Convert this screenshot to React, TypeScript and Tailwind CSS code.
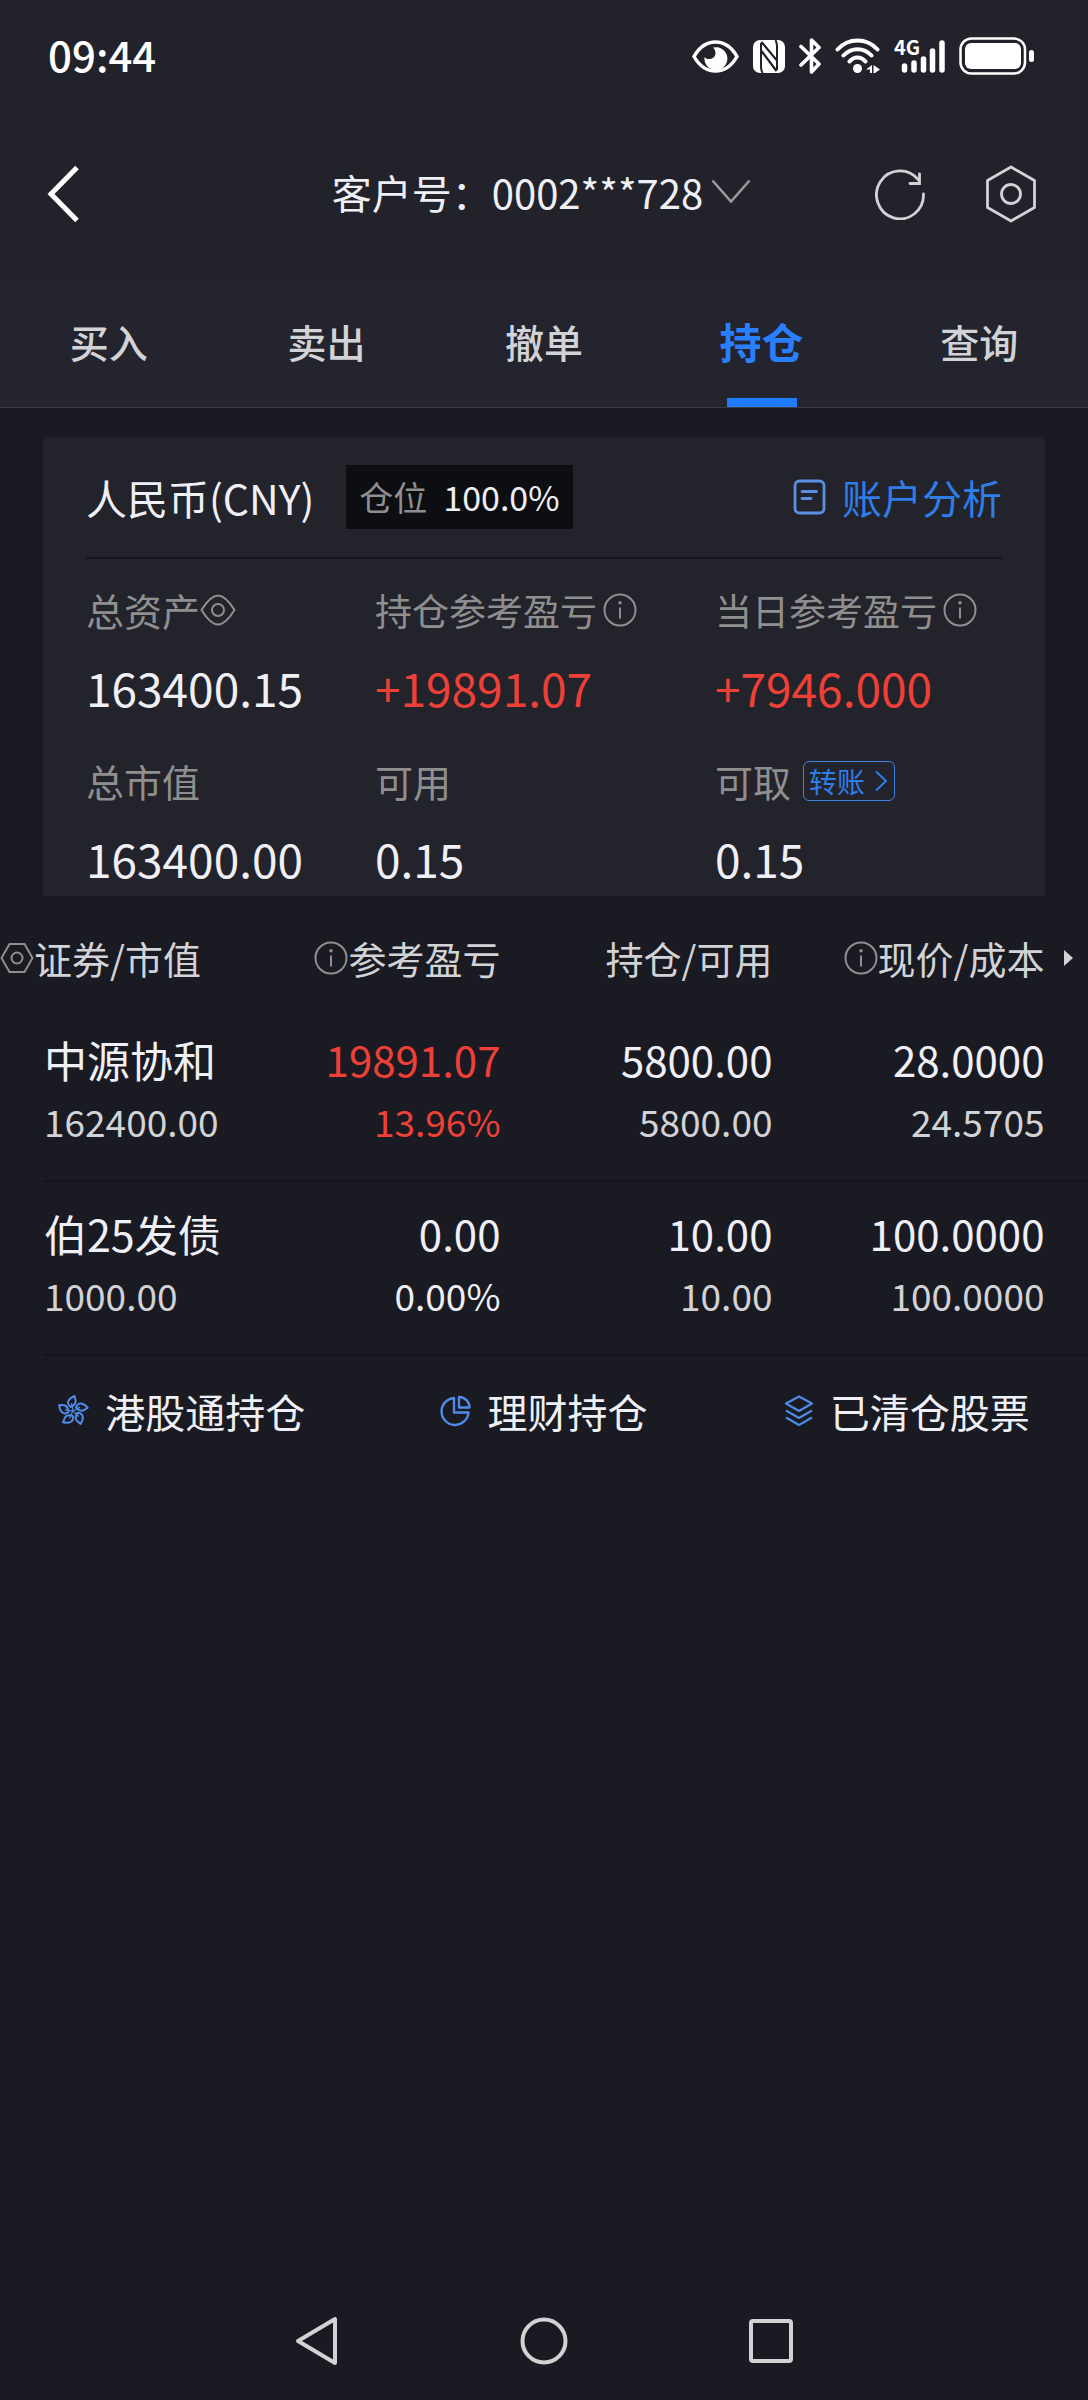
import React, { useState } from 'react';

type IconProps = { className?: string };

const EyeStatusIcon: React.FC<IconProps> = ({ className }) => (
  <svg className={className} width="47" height="33" viewBox="0 0 47 33" fill="none">
    <path d="M2 16.500C8 6 15 2 23.500 2S39 6 45 16.500C39 27 32 31 23.500 31S8 27 2 16.500Z" stroke="currentColor" strokeWidth="3.500" />
    <path d="M21 7.500A11.500 11.500 0 1 1 12.500 17C15 20.500 23 19.500 23.500 13.500C23.700 11 22.500 9 21 7.500Z" fill="currentColor" />
  </svg>
);

const NfcIcon: React.FC<IconProps> = ({ className }) => (
  <svg className={className} width="32" height="33" viewBox="0 0 32 33">
    <rect width="32" height="33" rx="7" fill="currentColor" />
    <path d="M8 3V27C8 29.500 8.500 31 9.500 33M24 30V6C24 3.500 23.500 2 22.500 0" fill="none" stroke="#22222a" strokeWidth="2" />
    <path d="M8.500 2L23.500 20M8.500 11L23.500 31" stroke="#22222a" strokeWidth="2.200" />
  </svg>
);

const BluetoothIcon: React.FC<IconProps> = ({ className }) => (
  <svg className={className} width="22" height="36" viewBox="0 0 22 36" fill="none" stroke="currentColor" strokeWidth="3.600" strokeLinecap="round" strokeLinejoin="round">
    <path d="M2 8.500L20 26L12.500 34V2L20 9.500L2 27" />
  </svg>
);

const WifiIcon: React.FC<IconProps> = ({ className }) => (
  <svg className={className} width="45" height="36" viewBox="0 0 45 36" fill="none" stroke="currentColor" strokeWidth="4" strokeLinecap="round">
    <path d="M2.500 11.500C13.500 -.5 31.500 -.5 42.500 11.500M8.500 17.500C16 9 29 9 36.500 17.500M14.500 23.500C19 18 26 18 30.500 23.500" />
    <circle cx="22.500" cy="30.500" r="4.500" fill="currentColor" stroke="none" />
    <path d="M31 31.500L37 27V35H35V31.500ZM38.500 27L45 31.500L40 35H38.500Z" fill="currentColor" stroke="none" />
  </svg>
);

const SignalIcon: React.FC<IconProps> = ({ className }) => (
  <svg className={className} width="51" height="48" viewBox="0 -6 51 48" fill="none" stroke="currentColor" strokeLinecap="round">
    <text x="0" y="17" fontSize="20" fontWeight="700" fill="currentColor" stroke="none">4G</text>
    <path d="M10.500 28V32M20 25V32M29.500 21V32M38.500 13V32M48 5V32" strokeWidth="5.500" />
  </svg>
);

const BatteryIcon: React.FC<IconProps> = ({ className }) => (
  <svg className={className} width="75" height="38" viewBox="0 0 75 38">
    <rect x="1.500" y="1.500" width="64.500" height="35" rx="11" fill="none" stroke="currentColor" strokeWidth="2.500" />
    <rect x="6" y="6" width="56" height="26" rx="6" fill="currentColor" />
    <rect x="70" y="13" width="5" height="12" rx="2.500" fill="currentColor" />
  </svg>
);

const BackIcon: React.FC<IconProps> = ({ className }) => (
  <svg className={className} width="34" height="58" viewBox="0 0 34 58" fill="none" stroke="currentColor" strokeWidth="5">
    <path d="M30 2.500L4 29L30 55.500" />
  </svg>
);

const ChevronDownIcon: React.FC<IconProps> = ({ className }) => (
  <svg className={className} width="40" height="25" viewBox="0 0 40 25" fill="none" stroke="currentColor" strokeWidth="2.500">
    <path d="M1.500 1.500L20 22.500L38.500 1.500" />
  </svg>
);

const RefreshIcon: React.FC<IconProps> = ({ className }) => (
  <svg className={className} width="50" height="52" viewBox="0 0 50 52" fill="none" stroke="currentColor" strokeWidth="2.800" strokeLinecap="round">
    <path d="M48.500 26A23.500 24 0 1 1 43.500 12" />
    <path d="M44.500 6V15.500H35" />
  </svg>
);

const HexagonIcon: React.FC<IconProps> = ({ className }) => (
  <svg className={className} width="50" height="58" viewBox="0 0 50 58" fill="none" stroke="currentColor" strokeWidth="2.800" strokeLinejoin="round">
    <path d="M25 2L48.500 15.500V42.500L25 56L1.500 42.500V15.500Z" />
    <circle cx="25" cy="29" r="9.500" />
  </svg>
);

const SmallHexagonIcon: React.FC<IconProps> = ({ className }) => (
  <svg className={className} width="34" height="32" viewBox="0 0 34 32" fill="none" stroke="currentColor" strokeWidth="2" strokeLinejoin="round">
    <path d="M1.500 16L9.500 2H24.500L32.500 16L24.500 30H9.500Z" />
    <circle cx="17" cy="16" r="5.500" />
  </svg>
);

const EyeIcon: React.FC<IconProps> = ({ className }) => (
  <svg className={className} width="36" height="32" viewBox="0 0 36 32" fill="none" stroke="currentColor" strokeWidth="2" strokeLinejoin="round">
    <path d="M1.500 16C5.500 9.500 11 1.500 18 1.500S30.500 9.500 34.500 16C30.500 22.500 25 30.500 18 30.500S5.500 22.500 1.500 16Z" />
    <circle cx="18" cy="16" r="6" />
  </svg>
);

const InfoIcon: React.FC<IconProps> = ({ className }) => (
  <svg className={className} width="34" height="34" viewBox="0 0 34 34" fill="none" stroke="currentColor" strokeWidth="2">
    <circle cx="17" cy="17" r="15.500" />
    <path d="M17 14.500V25.500" />
    <circle cx="17" cy="9.800" r="1.700" fill="currentColor" stroke="none" />
  </svg>
);

const ReportIcon: React.FC<IconProps> = ({ className }) => (
  <svg className={className} width="34" height="36" viewBox="0 0 34 36" fill="none" stroke="currentColor" strokeWidth="2.800" strokeLinecap="round">
    <rect x="3" y="2" width="29" height="32" rx="4.500" />
    <path d="M10 12.500H24.500M10 19.500H19" />
  </svg>
);

const FlowerIcon: React.FC<IconProps> = ({ className }) => (
  <svg className={className} width="32" height="32" viewBox="-16 -16 32 32" fill="none" stroke="currentColor" strokeWidth="2" strokeLinejoin="round">
    {[0, 72, 144, 216, 288].map((deg) => (
      <g key={deg} transform={`rotate(${deg})`}>
        <path d="M-2.500 -4C-7.500 -8 -4.500 -12.500 1.500 -15C1.500 -12.500 6 -7.500 -2.500 -4Z" />
        <path d="M0 0C0 -2 -1 -4 -1.500 -8" strokeWidth="1.200" />
      </g>
    ))}
  </svg>
);

const PieIcon: React.FC<IconProps> = ({ className }) => (
  <svg className={className} width="31" height="32" viewBox="0 0 31 32" fill="none" stroke="currentColor" strokeWidth="2.400" strokeLinejoin="round">
    <path d="M14 3A13.500 13.500 0 1 0 28.500 17.500H14Z" />
    <path d="M19 2V12.500H29.500C29.500 7 25 2 19 2Z" />
  </svg>
);

const LayersIcon: React.FC<IconProps> = ({ className }) => (
  <svg className={className} width="30" height="32" viewBox="0 0 30 32" fill="none" stroke="currentColor" strokeWidth="2.200" strokeLinejoin="round">
    <path d="M15 1.500L28 8.500L15 16L2 8.500ZM2 15.500L15 23L28 15.500M2 22.500L15 30L28 22.500" />
  </svg>
);

const tabs = ['买入', '卖出', '撤单', '持仓', '查询'];

const holdings = [
  {
    name: '中源协和',
    marketValue: '162400.00',
    profit: '19891.07',
    profitRate: '13.96%',
    color: 'text-[#ef4038]',
    amount: '5800.00',
    available: '5800.00',
    price: '28.0000',
    cost: '24.5705',
  },
  {
    name: '伯25发债',
    marketValue: '1000.00',
    profit: '0.00',
    profitRate: '0.00%',
    color: 'text-[#efeff6]',
    amount: '10.00',
    available: '10.00',
    price: '100.0000',
    cost: '100.0000',
  },
];

const links = [
  { label: '港股通持仓', Icon: FlowerIcon },
  { label: '理财持仓', Icon: PieIcon },
  { label: '已清仓股票', Icon: LayersIcon },
];

const StatusBar: React.FC = () => (
  <div className="flex h-28 items-center justify-between pl-12 pr-[54px] text-white">
    <span className="pb-1 text-[42px] font-medium leading-[60px]">09:44</span>
    <div className="flex items-center gap-[14px]">
      <EyeStatusIcon />
      <NfcIcon />
      <BluetoothIcon />
      <WifiIcon />
      <SignalIcon />
      <BatteryIcon />
    </div>
  </div>
);

type StatProps = {
  label: React.ReactNode;
  value: string;
  valueClass?: string;
};

const Stat: React.FC<StatProps> = ({ label, value, valueClass = 'text-[#efeff6]' }) => (
  <div>
    <dt className="flex h-[50px] items-center whitespace-nowrap text-[38px] leading-[50px] text-[#8f8f8f]">{label}</dt>
    <dd className={`mt-[22px] text-[46px] leading-[60px] ${valueClass}`}>{value}</dd>
  </div>
);

type CellProps = {
  top: string;
  bottom: string;
  topClass?: string;
  bottomClass?: string;
};

const Cell: React.FC<CellProps> = ({ top, bottom, topClass = 'text-[#efeff6]', bottomClass = 'text-[#d2d3d6]' }) => (
  <td className="border-b-2 border-[#131318] p-0 text-right align-top">
    <div className={`pt-5 text-[42px] leading-[62px] ${topClass}`}>{top}</div>
    <div className={`text-[37px] leading-[62px] ${bottomClass}`}>{bottom}</div>
  </td>
);

const App: React.FC = () => {
  const [activeTab, setActiveTab] = useState('持仓');

  return (
    <div className="flex min-h-screen flex-col bg-[#1a1a22] font-['Noto_Sans_CJK_SC',sans-serif] text-[#efeff6]">
      <header className="bg-[#22222a] pb-[6px]">
        <StatusBar />
        <div className="grid h-[163px] grid-cols-[1fr_auto_1fr] items-center pl-[47px] pr-[52px]">
          <button aria-label="返回" className="justify-self-start text-white">
            <BackIcon />
          </button>
          <button className="flex items-center gap-2 pb-1 text-[40px] leading-[60px]">
            <span>客户号：0002***728</span>
            <ChevronDownIcon className="text-[#9a9a9a]" />
          </button>
          <div className="flex items-center gap-[61px] justify-self-end text-[#d2d3d6]">
            <button aria-label="刷新">
              <RefreshIcon />
            </button>
            <button aria-label="设置">
              <HexagonIcon />
            </button>
          </div>
        </div>
      </header>

      <nav className="flex h-[127px] border-b border-[#3b3b41] bg-[#24242e]">
        {tabs.map((tab) => (
          <button
            key={tab}
            onClick={() => setActiveTab(tab)}
            className={
              tab === activeTab
                ? 'flex flex-1 flex-col items-center text-[42px] font-bold text-[#2a7fff]'
                : 'flex flex-1 flex-col items-center text-[39px] font-medium text-[#d2d3d6]'
            }
          >
            <span className="pt-[30px] leading-[60px]">{tab}</span>
            {tab === activeTab && <span className="mt-auto h-[9px] w-[70px] bg-[#1f7cff]" />}
          </button>
        ))}
      </nav>

      <main>
        <section className="mx-[43px] mt-[29px] bg-[#23232c] px-[43px] pb-2">
          <div className="flex h-[122px] items-center border-b-2 border-[#15151a]">
            <h2 className="text-[41px] leading-[60px]">人民币(CNY)</h2>
            <div className="ml-8 flex h-16 items-center gap-4 bg-[#0d0e12] px-[13px] text-[34px] leading-[50px]">
              <span className="text-[#8f8f8f]">仓位</span>
              <span>100.0%</span>
            </div>
            <a href="#analysis" className="ml-auto flex items-center gap-4 text-[40px] leading-[60px] text-[#2f7de6]">
              <ReportIcon className="text-[#5b8fe0]" />
              账户分析
            </a>
          </div>
          <dl className="grid grid-cols-[289fr_340fr_287fr] gap-y-[39px] pt-[26px]">
            <Stat label={<>总资产<EyeIcon /></>} value="163400.15" />
            <Stat
              label={<span className="flex items-center gap-[6px] text-[37px]">持仓参考盈亏<InfoIcon /></span>}
              value="+19891.07"
              valueClass="text-[#ef4038]"
            />
            <Stat
              label={<span className="flex items-center gap-[6px] text-[37px]">当日参考盈亏<InfoIcon /></span>}
              value="+7946.000"
              valueClass="text-[#ef4038]"
            />
            <Stat label="总市值" value="163400.00" />
            <Stat label="可用" value="0.15" />
            <Stat
              label={
                <>
                  可取
                  <button className="ml-3 flex h-10 items-center gap-2 rounded-md border border-[#3f82e0] px-[5px] text-[28px] leading-9 text-[#2f7de6]">
                    转账
                    <svg width="16" height="22" viewBox="0 0 16 22" fill="none" stroke="currentColor" strokeWidth="2">
                      <path d="M3 1.500L13 11L3 20.500" />
                    </svg>
                  </button>
                </>
              }
              value="0.15"
            />
          </dl>
        </section>

        <table className="w-full table-fixed border-separate border-spacing-0">
          <colgroup>
            <col className="w-[21%]" />
            <col className="w-[25%]" />
            <col className="w-[25%]" />
            <col className="w-[25%]" />
            <col className="w-[4%]" />
          </colgroup>
          <thead>
            <tr className="h-28 whitespace-nowrap text-[38px] leading-[60px] text-[#d2d3d6]">
              <th className="p-0 pt-3 font-normal">
                <div className="flex items-center">
                  <SmallHexagonIcon className="shrink-0 text-[#8f8f8f]" />
                  证券/市值
                </div>
              </th>
              <th className="p-0 pt-3 font-normal">
                <div className="flex items-center justify-end">
                  <InfoIcon className="text-[#8f8f8f]" />
                  参考盈亏
                </div>
              </th>
              <th className="p-0 pt-3 text-right font-normal">持仓/可用</th>
              <th className="p-0 pt-3 font-normal">
                <div className="flex items-center justify-end">
                  <InfoIcon className="text-[#8f8f8f]" />
                  现价/成本
                </div>
              </th>
              <th className="p-0 pt-3 font-normal">
                <svg className="ml-5" width="9" height="16" viewBox="0 0 9 16" fill="currentColor">
                  <path d="M0 0L9 8L0 16Z" />
                </svg>
              </th>
            </tr>
          </thead>
          <tbody>
            {holdings.map((item) => (
              <tr key={item.name} className="h-[174px]">
                <td className="p-0 align-top">
                  <div className="ml-11 h-[174px] whitespace-nowrap border-b-2 border-[#131318] pt-5">
                    <div className="text-[43px] leading-[62px]">{item.name}</div>
                    <div className="text-[37px] leading-[62px] text-[#d2d3d6]">{item.marketValue}</div>
                  </div>
                </td>
                <Cell top={item.profit} bottom={item.profitRate} topClass={item.color} bottomClass={item.color} />
                <Cell top={item.amount} bottom={item.available} />
                <Cell top={item.price} bottom={item.cost} />
                <td className="border-b-2 border-[#131318] p-0" />
              </tr>
            ))}
          </tbody>
        </table>

        <div className="grid h-[110px] grid-cols-3">
          {links.map(({ label, Icon }) => (
            <a key={label} href="#holdings" className="flex items-center justify-center gap-4 text-[40px] leading-[60px]">
              <Icon className="text-[#4f8ae6]" />
              {label}
            </a>
          ))}
        </div>
      </main>

      <footer className="mt-auto flex h-[118px] items-center justify-center gap-[180px] text-[#d2d2d2]">
        <button aria-label="后退">
          <svg width="46" height="50" viewBox="0 0 46 50" fill="none" stroke="currentColor" strokeWidth="4" strokeLinejoin="round">
            <path d="M41 3V47L4 25Z" />
          </svg>
        </button>
        <button aria-label="主页">
          <svg width="48" height="50" viewBox="0 0 48 50" fill="none" stroke="currentColor" strokeWidth="4">
            <circle cx="24" cy="25" r="21.500" />
          </svg>
        </button>
        <button aria-label="最近任务">
          <svg width="46" height="50" viewBox="0 0 46 50" fill="none" stroke="currentColor" strokeWidth="4">
            <rect x="3" y="5" width="40" height="40" rx="2" />
          </svg>
        </button>
      </footer>
    </div>
  );
};

export default App;
